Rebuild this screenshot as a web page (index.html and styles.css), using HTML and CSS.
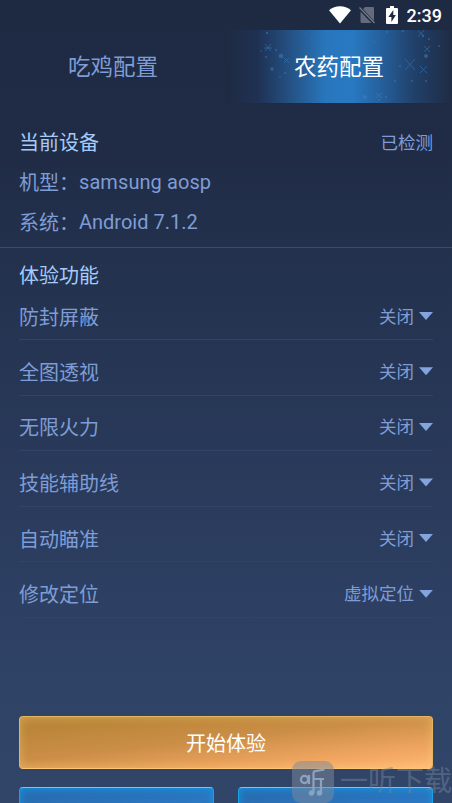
FILE: index.html
```html
<!DOCTYPE html>
<html lang="zh-CN">
<head>
<meta charset="utf-8">
<title>农药配置</title>
<link rel="stylesheet" href="styles.css">
</head>
<body>
<div class="screen">
  <header class="status">
    <svg class="wifi" viewBox="0 0 22 18"><path d="M0 4.200C6-1.100 16-1.100 22 4.200L11 17.500z" fill="#fff"/></svg>
    <svg class="sim" viewBox="0 0 17 18"><path d="M6 1h8q1 0 1 1v13L4 3zM1.500 5.500L12.500 17H3q-1.500 0-1.500-1.500z" fill="#636b7c"/><path d="M.5 1.500L15.500 17" stroke="#737b8a" stroke-width="1.300"/></svg>
    <svg class="battery" viewBox="0 0 12 18"><path d="M4 0h4v2h3q1 0 1 1v14q0 1-1 1H1q-1 0-1-1V3q0-1 1-1h3z" fill="#fff"/><path d="M7.300 4L2.400 11h3v5l4.500-7H7.300z" fill="#1e2a42"/></svg>
    <span class="clock">2:39</span>
  </header>
  <nav class="tabs">
    <div class="tab">吃鸡配置</div>
    <div class="tab active">
      <svg class="stars" viewBox="0 0 226 73" fill="#3b86cc" stroke="#3b86cc" stroke-width=".7">
        <g stroke="none" opacity=".75"><circle cx="55" cy="26" r="2.300"/><circle cx="46" cy="39" r="1.800"/><circle cx="200" cy="26" r="2"/><circle cx="139" cy="67" r="2"/><circle cx="41" cy="3" r="1.200"/><circle cx="40" cy="27" r="1"/><circle cx="59" cy="43" r="1"/><circle cx="86" cy="10" r="1"/><circle cx="161" cy="2" r="1"/><circle cx="177" cy="1" r="1.100"/><circle cx="197" cy="6" r="1.200"/><circle cx="203" cy="9" r="1"/><circle cx="213" cy="16" r="1"/><circle cx="174" cy="36" r="1"/><circle cx="186" cy="51" r="1"/><circle cx="200" cy="51" r="1"/><circle cx="169" cy="51" r="1"/><circle cx="153" cy="70" r="1"/><circle cx="160" cy="67" r="1"/><circle cx="50" cy="20" r="1"/><circle cx="35" cy="21" r=".8"/><circle cx="149" cy="12" r=".8"/><circle cx="54" cy="47" r=".8"/></g>
        <path d="M39 14l6 7M45 14l-6 7M38 18h8M58 28l5 5M63 28l-5 5M179 29l10 11M189 29l-10 11M192 1l6 5M198 0l-6 7M198 16l6 6M204 16l-6 6M194 36l7 7M201 36l-7 7M150 63l6 5M156 63l-6 5"/>
      </svg>
      <span class="tab-label">农药配置</span>
    </div>
  </nav>
  <section class="device">
    <div class="line heading"><span>当前设备</span><span class="value">已检测</span></div>
    <div class="line"><span>机型：<span class="latin model">samsung aosp</span></span></div>
    <div class="line"><span>系统：<span class="latin">Android 7.1.2</span></span></div>
  </section>
  <section class="features">
    <h2 class="feature-title">体验功能</h2>
    <div class="row first"><span>防封屏蔽</span><span class="value"><span class="choice">关闭</span><i class="caret"></i></span></div>
    <div class="row"><span>全图透视</span><span class="value"><span class="choice">关闭</span><i class="caret"></i></span></div>
    <div class="row"><span>无限火力</span><span class="value"><span class="choice">关闭</span><i class="caret"></i></span></div>
    <div class="row"><span>技能辅助线</span><span class="value"><span class="choice">关闭</span><i class="caret"></i></span></div>
    <div class="row"><span>自动瞄准</span><span class="value"><span class="choice">关闭</span><i class="caret"></i></span></div>
    <div class="row"><span>修改定位</span><span class="value"><span class="choice">虚拟定位</span><i class="caret"></i></span></div>
  </section>
  <footer class="actions">
    <div class="start">开始体验</div>
    <div class="secondary"><div class="blue"></div><div class="blue"></div></div>
  </footer>
  <div class="watermark">
    <div class="mark">
      <svg viewBox="0 0 42 42" fill="none" stroke="#8ba3bf" stroke-width="2.200"><circle cx="12.500" cy="18.500" r="3.600"/><path d="M17 14v9M21.500 32V12q0-2 3-2.200l8-1.300M22 18h10M29 18v14"/><g fill="#8ba3bf" stroke="none"><circle cx="19.500" cy="32" r="2.700"/><circle cx="27.500" cy="32" r="2.700"/></g></svg>
    </div>
    <span class="mark-text">一听下载</span>
  </div>
</div>
</body>
</html>
```
FILE: styles.css
```css
* { box-sizing: border-box; }
body { margin: 0; }
.screen {
  position: relative;
  width: 452px;
  height: 803px;
  overflow: hidden;
  display: flex;
  flex-direction: column;
  background: linear-gradient(#1e2a42 0, #202c46 150px, #243350 300px, #2a3a5b 480px, #2f4367 680px, #314569 100%);
  color: #7e9dd6;
  font-family: Roboto, "Noto Sans CJK SC", sans-serif;
  font-size: 20px;
}
.status {
  height: 30px;
  flex: none;
  display: flex;
  align-items: center;
  justify-content: flex-end;
  padding-right: 10px;
  color: #fff;
}
.wifi { width: 22px; height: 18px; margin-right: 8px; }
.sim { width: 17px; height: 18px; margin-right: 10px; }
.battery { width: 12px; height: 18px; margin-right: 9px; }
.clock { font-size: 18px; font-weight: 500; line-height: 30px; padding-top: 1px; }
.tabs { height: 73px; flex: none; display: flex; font-size: 22.5px; }
.tab { position: relative; flex: 1; display: flex; align-items: center; justify-content: center; padding-bottom: 3px; }
.active {
  color: #fff;
  background: linear-gradient(90deg, #1e2a42 0, #1f3153 14%, #245386 29%, #2876bd 44%, #2879c2 56%, #255f9b 69%, #21416a 83%, #1f2b44 100%);
}
.stars { position: absolute; inset: 0; width: 226px; height: 73px; opacity: .65; }
.tab-label { position: relative; }
.device {
  flex: none;
  height: 145px;
  padding: 18px 19px 0;
  border-bottom: 1px solid #374b70;
}
.line { height: 40px; display: flex; align-items: center; justify-content: space-between; }
.latin { display: inline-block; transform: translateY(-1px); }
.model { letter-spacing: .08px; }
.heading, .feature-title { color: #a6cbfa; }
.value { font-size: 17.5px; color: #7e9dd6; display: flex; align-items: center; }
.features { flex: none; padding: 8px 19px 0; }
.feature-title { margin: 0; height: 40px; line-height: 40px; font-size: 20px; font-weight: 400; }
.row {
  height: 55.6px;
  padding-top: 8px;
  display: flex;
  align-items: center;
  justify-content: space-between;
  border-bottom: 1px solid #314467;
}
.row.first { height: 44px; padding: 0 0 3px; }
.choice { padding-bottom: 2px; }
.caret {
  width: 14px;
  height: 8px;
  margin-left: 5px;
  background: #82a4df;
  clip-path: polygon(0 0, 100% 0, 50% 100%);
}
.actions { flex: none; margin-top: 98px; padding: 0 19px; }
.start {
  height: 53px;
  display: flex;
  align-items: center;
  justify-content: center;
  border: 1px solid #e5b661;
  border-bottom-color: #ffc576;
  border-radius: 4px;
  background: linear-gradient(174deg, #bb8639 15%, #cb8e47 45%, #f2a762 80%, #ffb975);
  box-shadow: inset 0 0 9px 1px rgba(255, 218, 118, .35);
  color: #fff;
}
.secondary { display: flex; gap: 24px; margin-top: 18px; }
.blue {
  flex: 1;
  height: 53px;
  border: 1px solid #1ba0e6;
  border-top-color: #8bbde8;
  border-radius: 4px;
  background: linear-gradient(170deg, #286aad, #2b79c5 60%);
  box-shadow: inset 0 1px 7px 1px rgba(18, 153, 226, .8);
}
.watermark { position: absolute; left: 292px; top: 761px; display: flex; align-items: center; }
.mark { width: 42px; height: 42px; border-radius: 9px; background: rgba(125, 137, 153, .52); }
.mark svg { display: block; width: 42px; height: 42px; }
.mark-text { margin-left: 6px; font-size: 28px; line-height: 42px; white-space: nowrap; color: rgba(115, 130, 155, .5); }
```
